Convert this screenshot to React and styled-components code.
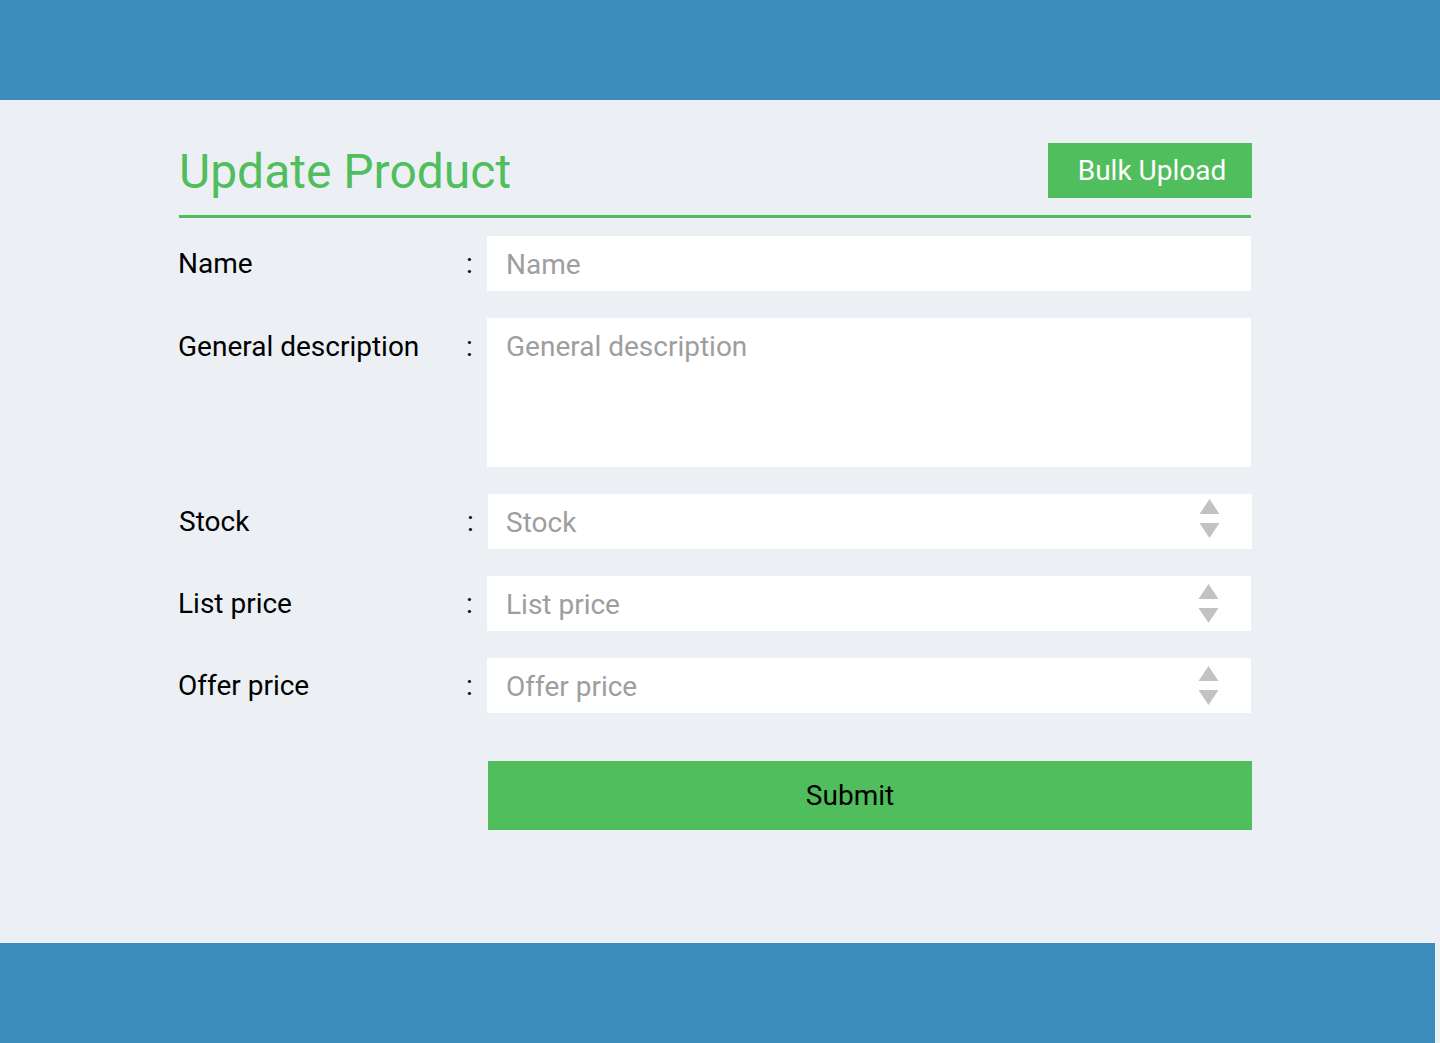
import React from "react";
import styled, { createGlobalStyle } from "styled-components";

const GlobalStyle = createGlobalStyle`
  html, body {
    margin: 0;
    padding: 0;
    background: #ecf0f5;
    font-family: Roboto, "Liberation Sans", sans-serif;
  }
  * {
    box-sizing: border-box;
  }
`;

const Page = styled.div`
  display: flex;
  flex-direction: column;
  min-height: 1043px;
`;

const Header = styled.header`
  height: 100px;
  background: #3c8dbc;
`;

const Footer = styled.footer`
  height: 100px;
  margin-right: 5px;
  background: #3c8dbc;
`;

const Main = styled.main`
  flex: 1;
  padding: 43px 189px 0 179px;
`;

const TitleBar = styled.div`
  display: flex;
  justify-content: space-between;
  align-items: flex-start;
  height: 75px;
  border-bottom: 3px solid #50be5c;
`;

const Title = styled.h1`
  margin: 0;
  padding-top: 1px;
  font-size: 48px;
  font-weight: 400;
  line-height: 56px;
  color: #50be5c;
`;

const BulkButton = styled.button`
  width: 204px;
  height: 55px;
  margin-right: -1px;
  padding: 0 0 0 4px;
  border: none;
  background: #50be5c;
  color: #fff;
  font-family: inherit;
  font-size: 28px;
  cursor: pointer;
`;

const Form = styled.form`
  display: flex;
  flex-direction: column;
  gap: 27px;
  padding-top: 18px;
`;

const Row = styled.div`
  display: grid;
  grid-template-columns: 287px 21px 1fr;
  align-items: ${(p) => (p.$top ? "start" : "center")};
  margin-left: ${(p) => (p.$shift ? "1px" : "0")};
  margin-right: ${(p) => (p.$shift ? "-1px" : "0")};
`;

const Label = styled.label`
  margin-left: -1px;
  font-size: 28px;
  color: #000;
  padding-top: ${(p) => (p.$top ? "12px" : "0")};
`;

const Colon = styled.span`
  font-size: 28px;
  color: #000;
  padding-top: ${(p) => (p.$top ? "12px" : "0")};
`;

const FieldWrap = styled.div`
  position: relative;
`;

const Input = styled.input`
  display: block;
  width: 100%;
  height: 55px;
  border: none;
  outline: none;
  padding: 2px 60px 0 ${(p) => (p.$tight ? "18px" : "19px")};
  background: #fff;
  font-family: inherit;
  font-size: 28px;
  color: #333;
  &::placeholder {
    color: #9e9e9e;
  }
  &::-webkit-outer-spin-button,
  &::-webkit-inner-spin-button {
    -webkit-appearance: none;
    margin: 0;
  }
  -moz-appearance: textfield;
`;

const TextArea = styled.textarea`
  display: block;
  width: 100%;
  height: 149px;
  border: none;
  outline: none;
  resize: none;
  padding: 13px 19px;
  background: #fff;
  font-family: inherit;
  font-size: 28px;
  line-height: 32px;
  color: #333;
  &::placeholder {
    color: #9e9e9e;
  }
`;

const Spinner = styled.svg`
  position: absolute;
  right: 32px;
  top: ${(p) => p.$top}px;
  width: 21px;
  height: 40px;
`;

const SubmitRow = styled.div`
  display: grid;
  grid-template-columns: 309px 1fr;
  margin-top: 21px;
  margin-right: -1px;
`;

const SubmitButton = styled.button`
  grid-column: 2;
  height: 69px;
  padding: 0 40px 0 0;
  border: none;
  background: #50be5c;
  color: #000;
  font-family: inherit;
  font-size: 28px;
  cursor: pointer;
`;

const SpinArrows = ({ top }) => (
  <Spinner $top={top} viewBox="0 0 21 40">
    <polygon points="10.5,1 20.5,16 0.5,16" fill="#c2c2c2" />
    <polygon points="0.5,25 20.5,25 10.5,40" fill="#c2c2c2" />
  </Spinner>
);

const NumberField = ({ placeholder, spinTop = 7, tight }) => (
  <FieldWrap>
    <Input type="number" placeholder={placeholder} $tight={tight} />
    <SpinArrows top={spinTop} />
  </FieldWrap>
);

const App = () => {
  return (
    <Page>
      <GlobalStyle />
      <Header />
      <Main>
        <TitleBar>
          <Title>Update Product</Title>
          <BulkButton type="button">Bulk Upload</BulkButton>
        </TitleBar>
        <Form onSubmit={(e) => e.preventDefault()}>
          <Row>
            <Label>Name</Label>
            <Colon>:</Colon>
            <Input type="text" placeholder="Name" />
          </Row>
          <Row $top>
            <Label $top>General description</Label>
            <Colon $top>:</Colon>
            <TextArea placeholder="General description" />
          </Row>
          <Row $shift>
            <Label>Stock</Label>
            <Colon>:</Colon>
            <NumberField placeholder="Stock" spinTop={4} tight />
          </Row>
          <Row>
            <Label>List price</Label>
            <Colon>:</Colon>
            <NumberField placeholder="List price" />
          </Row>
          <Row>
            <Label>Offer price</Label>
            <Colon>:</Colon>
            <NumberField placeholder="Offer price" />
          </Row>
          <SubmitRow>
            <SubmitButton type="submit">Submit</SubmitButton>
          </SubmitRow>
        </Form>
      </Main>
      <Footer />
    </Page>
  );
};

export default App;
